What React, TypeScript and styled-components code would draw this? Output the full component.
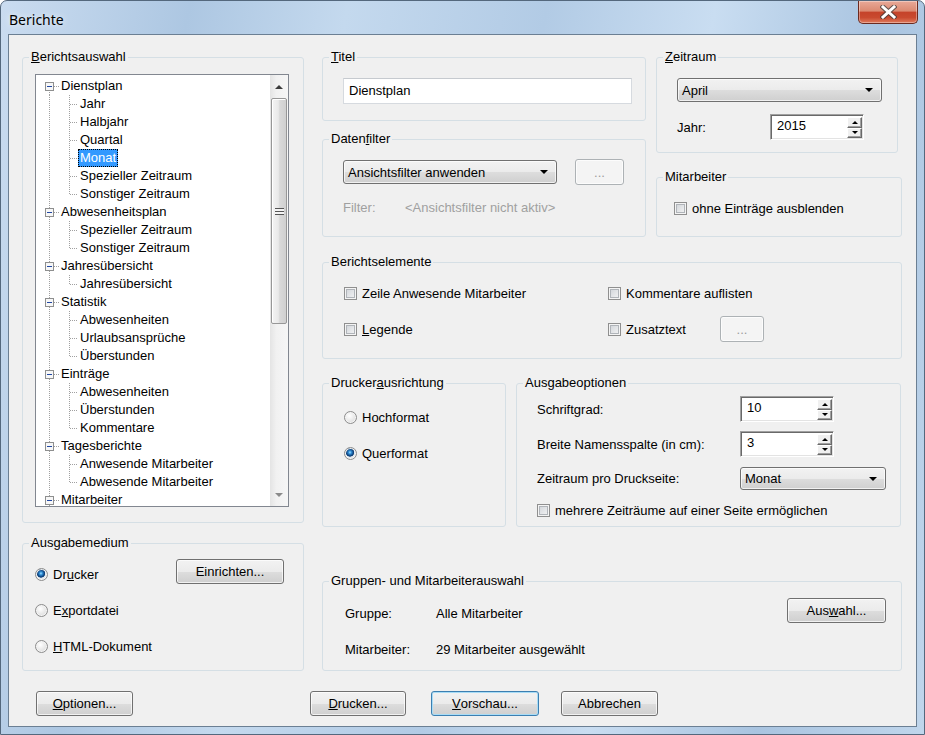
import React from 'react';
import styled, { createGlobalStyle } from 'styled-components';

const GlobalStyle = createGlobalStyle`
  html, body {
    margin: 0;
    padding: 0;
    background: #fff;
  }
  body {
    font-family: "Liberation Sans", Arial, sans-serif;
    font-size: 13px;
    color: #000;
  }
  * {
    box-sizing: border-box;
  }
`;

type Node = { label: string; children: string[] };

const tree: Node[] = [
    { label: 'Dienstplan', children: ['Jahr', 'Halbjahr', 'Quartal', 'Monat', 'Spezieller Zeitraum', 'Sonstiger Zeitraum'] },
    { label: 'Abwesenheitsplan', children: ['Spezieller Zeitraum', 'Sonstiger Zeitraum'] },
    { label: 'Jahresübersicht', children: ['Jahresübersicht'] },
    { label: 'Statistik', children: ['Abwesenheiten', 'Urlaubsansprüche', 'Überstunden'] },
    { label: 'Einträge', children: ['Abwesenheiten', 'Überstunden', 'Kommentare'] },
    { label: 'Tagesberichte', children: ['Anwesende Mitarbeiter', 'Abwesende Mitarbeiter'] },
    { label: 'Mitarbeiter', children: [] },
];

const dots = { stroke: '#a0a0a0', strokeDasharray: '1 1', shapeRendering: 'crispEdges' as const };

const TreeView = () => {
    const rows: React.ReactNode[] = [];
    tree.forEach((node, i) => {
        rows.push(
            <TreeRow key={`n${i}`}>
                <svg width="23" height="18">
                    <line x1="13.5" y1={i === 0 ? 9 : 0} x2="13.5" y2="18" {...dots}/>
                    <line x1="18" y1="9.5" x2="23" y2="9.5" {...dots}/>
                    <rect x="9.5" y="5.5" width="8" height="8" fill="#f7f7f7" stroke="#8e8f8f" shapeRendering="crispEdges"/>
                    <line x1="11" y1="9.5" x2="16" y2="9.5" stroke="#2148a3" shapeRendering="crispEdges"/>
                </svg>
                <NodeLabel>{node.label}</NodeLabel>
            </TreeRow>
        );
        node.children.forEach((child, j) => {
            const last = j === node.children.length - 1;
            rows.push(
                <TreeRow key={`n${i}c${j}`}>
                    <svg width="42" height="18">
                        <line x1="13.5" y1="0" x2="13.5" y2="18" {...dots}/>
                        <line x1="33.5" y1="0" x2="33.5" y2={last ? 10 : 18} {...dots}/>
                        <line x1="34" y1="9.5" x2="42" y2="9.5" {...dots}/>
                    </svg>
                    <NodeLabel $selected={i === 0 && child === 'Monat'}>{child}</NodeLabel>
                </TreeRow>
            );
        });
    });

    return (
        <Tree>
            <TreeList>{rows}</TreeList>
            <Scrollbar>
                <ScrollArrow><Triangle $dir="up" $color="#3c3c3c"/></ScrollArrow>
                <ScrollTrack>
                    <Thumb>
                        <Grip/>
                    </Thumb>
                </ScrollTrack>
                <ScrollArrow><Triangle $dir="down" $color="#8a8a8a"/></ScrollArrow>
            </Scrollbar>
        </Tree>
    );
};

const Spin = ({ value, width }: { value: string; width: number }) => (
    <SpinBox $w={width}>
        <SpinValue>{value}</SpinValue>
        <SpinButtons>
            <SpinBtn><Triangle $dir="up" $size={3}/></SpinBtn>
            <SpinBtn><Triangle $dir="down" $size={3}/></SpinBtn>
        </SpinButtons>
    </SpinBox>
);

const Select = ({ value, width, height }: { value: string; width: number; height?: number }) => (
    <Combo $w={width} $h={height}>
        <span>{value}</span>
        <Triangle $dir="down" $size={4}/>
    </Combo>
);

const Check = ({ children, width }: { children: React.ReactNode; width?: number }) => (
    <CheckItem $w={width}>
        <CheckBox/>
        <span>{children}</span>
    </CheckItem>
);

const Radio = ({ children, checked }: { children: React.ReactNode; checked?: boolean }) => (
    <RadioItem>
        <RadioDot $checked={checked}/>
        <span>{children}</span>
    </RadioItem>
);

export default function App() {
    return (
        <>
            <GlobalStyle/>
            <Window>
                <TitleBar>
                    <Title>Berichte</Title>
                    <CloseButton>
                        <svg width="17" height="14" viewBox="0 0 17 14">
                            <path d="M3 2 L14 12 M14 2 L3 12" stroke="#3b3b3b" strokeOpacity="0.75" strokeWidth="5" strokeLinecap="square"/>
                            <path d="M3 2 L14 12 M14 2 L3 12" stroke="#fff" strokeWidth="3" strokeLinecap="square"/>
                        </svg>
                    </CloseButton>
                </TitleBar>

                <Client>
                    <Main>
                        <LeftCol>
                            <Group>
                                <Legend><u>B</u>erichtsauswahl</Legend>
                                <TreeBody>
                                    <TreeView/>
                                </TreeBody>
                            </Group>

                            <Group>
                                <Legend>Ausgabemedium</Legend>
                                <MediaBody>
                                    <RadioStack>
                                        <Radio checked>Dr<u>u</u>cker</Radio>
                                        <Radio>E<u>x</u>portdatei</Radio>
                                        <Radio><u>H</u>TML-Dokument</Radio>
                                    </RadioStack>
                                    <Button $w={108} $mt={3}>Einrichten...</Button>
                                </MediaBody>
                            </Group>
                        </LeftCol>

                        <RightCol>
                            <TopGrid>
                                <StackCol $gap={10}>
                                    <Group>
                                        <Legend><u>T</u>itel</Legend>
                                        <TitleBody>
                                            <TextInput>Dienstplan</TextInput>
                                        </TitleBody>
                                    </Group>
                                    <Group>
                                        <Legend>Daten<u>f</u>ilter</Legend>
                                        <FilterBody>
                                            <FilterRow>
                                                <Select value="Ansichtsfilter anwenden" width={214}/>
                                                <Button $w={49} $h={26} $disabled $ml={18}>...</Button>
                                            </FilterRow>
                                            <FilterInfo>
                                                <FilterKey>Filter:</FilterKey>
                                                <span>&lt;Ansichtsfilter nicht aktiv&gt;</span>
                                            </FilterInfo>
                                        </FilterBody>
                                    </Group>
                                </StackCol>

                                <StackCol $gap={16}>
                                    <PeriodGroup>
                                        <Legend><u>Z</u>eitraum</Legend>
                                        <PeriodBody>
                                            <Select value="April" width={205}/>
                                            <YearRow>
                                                <YearLabel>Jahr:</YearLabel>
                                                <Spin value="2015" width={94}/>
                                            </YearRow>
                                        </PeriodBody>
                                    </PeriodGroup>
                                    <Group>
                                        <Legend>Mitarbeiter</Legend>
                                        <StaffBody>
                                            <Check>ohne Einträge ausblenden</Check>
                                        </StaffBody>
                                    </Group>
                                </StackCol>
                            </TopGrid>

                            <ElementsGroup>
                                <Legend>Berichtselemente</Legend>
                                <ElementsBody>
                                    <Check>Zeile Anwesende Mitarbeiter</Check>
                                    <Check>Kommentare auflisten</Check>
                                    <Check><u>L</u>egende</Check>
                                    <InlineRow>
                                        <Check width={112}>Zusatztext</Check>
                                        <Button $w={44} $h={26} $disabled>...</Button>
                                    </InlineRow>
                                </ElementsBody>
                            </ElementsGroup>

                            <OutputGrid>
                                <Group>
                                    <Legend>Drucker<u>a</u>usrichtung</Legend>
                                    <OrientBody>
                                        <RadioStack>
                                            <Radio>Hochformat</Radio>
                                            <Radio checked>Querformat</Radio>
                                        </RadioStack>
                                    </OrientBody>
                                </Group>
                                <Group>
                                    <Legend>Ausgabeoptionen</Legend>
                                    <OptionsBody>
                                        <OptRow $h={26}>
                                            <span>Schriftgrad:</span>
                                            <Spin value="10" width={94}/>
                                        </OptRow>
                                        <OptRow $h={26} $mt={9}>
                                            <span>Breite Namensspalte (in cm):</span>
                                            <Spin value="3" width={94}/>
                                        </OptRow>
                                        <OptRow $h={23} $mt={10}>
                                            <span>Zeitraum pro Druckseite:</span>
                                            <Select value="Monat" width={146} height={23}/>
                                        </OptRow>
                                        <OptRow $h={16} $mt={12}>
                                            <Check>mehrere Zeiträume auf einer Seite ermöglichen</Check>
                                        </OptRow>
                                    </OptionsBody>
                                </Group>
                            </OutputGrid>

                            <SelectionGroup>
                                <Legend>Gruppen- und Mitarbeiterauswahl</Legend>
                                <SelectionBody>
                                    <span>Gruppe:</span>
                                    <span>Alle Mitarbeiter</span>
                                    <Button $w={99}>Aus<u>w</u>ahl...</Button>
                                    <span>Mitarbeiter:</span>
                                    <span>29 Mitarbeiter ausgewählt</span>
                                </SelectionBody>
                            </SelectionGroup>
                        </RightCol>
                    </Main>

                    <Footer>
                        <Button $w={97}><u>O</u>ptionen...</Button>
                        <Button $w={96} $ml={177}><u>D</u>rucken...</Button>
                        <Button $w={108} $ml={25} $default><u>V</u>orschau...</Button>
                        <Button $w={97} $ml={22}>Abbrechen</Button>
                    </Footer>
                </Client>
            </Window>
        </>
    );
}

const Window = styled.div`
  width: 925px;
  height: 735px;
  border: 1px solid #54687d;
  border-radius: 7px 7px 0 0;
  padding: 0 7px 7px;
  display: flex;
  flex-direction: column;
  background: linear-gradient(100deg, #cadcf0 0%, #adc7e2 18%, #c4d9ee 33%, #b2cbe5 52%, #c9ddf1 68%, #a9c4e0 84%, #c0d6ec 100%);
`

const TitleBar = styled.div`
  height: 33px;
  margin: 0 -7px;
  padding: 0 6px 0 8px;
  display: flex;
  align-items: flex-start;
  justify-content: space-between;
`

const Title = styled.span`
  margin-top: 9px;
  font-family: "Noto Sans", "Open Sans", sans-serif;
  font-size: 14px;
  line-height: 20px;
  text-shadow: 0 0 6px rgba(255, 255, 255, 0.9);
`

const CloseButton = styled.div`
  width: 60px;
  height: 23px;
  display: flex;
  align-items: center;
  justify-content: center;
  border: 1px solid #6b2a1f;
  border-top: none;
  border-radius: 0 0 5px 5px;
  background: linear-gradient(#e8a998 0%, #db8a72 45%, #c5432a 52%, #c94a2f 75%, #df7a5c 100%);
  box-shadow: inset 0 0 0 1px rgba(255, 255, 255, 0.35);
`

const Client = styled.div`
  flex: 1;
  display: flex;
  flex-direction: column;
  padding: 14px 0 10px 13px;
  background: #f0f0f0;
  border: 1px solid #6b7f93;
`

const Main = styled.div`
  display: grid;
  grid-template-columns: 282px 580px;
  column-gap: 18px;
`

const LeftCol = styled.div`
  display: flex;
  flex-direction: column;
  gap: 12px;
`

const RightCol = styled.div`
  display: flex;
  flex-direction: column;
`

const Group = styled.fieldset`
  margin: 0;
  padding: 0;
  min-width: 0;
  border: 1px solid #d5dfe5;
  border-radius: 3px;
`

const Legend = styled.legend`
  margin-left: 6px;
  padding: 0 2px;
  line-height: 16px;
`

const TreeBody = styled.div`
  padding: 9px 14px 15px 12px;
`

const Tree = styled.div`
  height: 433px;
  display: flex;
  border: 1px solid #828790;
  background: #fff;
`

const TreeList = styled.div`
  flex: 1;
  padding-top: 2px;
  overflow: hidden;
`

const TreeRow = styled.div`
  height: 18px;
  display: flex;
  align-items: center;
  white-space: nowrap;

  svg {
    flex-shrink: 0;
  }
`

const NodeLabel = styled.span<{ $selected?: boolean }>`
  padding: 0 1px;
  line-height: 16px;
  border: 1px ${p => (p.$selected ? 'dotted #000' : 'solid transparent')};
  background: ${p => (p.$selected ? '#3399ff' : 'transparent')};
  color: ${p => (p.$selected ? '#fff' : '#000')};
`

const Scrollbar = styled.div`
  width: 18px;
  display: flex;
  flex-direction: column;
  background: linear-gradient(to right, #e4e4e4, #f1f1f1 35%, #f6f6f6);
`

const ScrollArrow = styled.div`
  height: 23px;
  display: flex;
  align-items: center;
  justify-content: center;
`

const ScrollTrack = styled.div`
  flex: 1;
  padding: 0 1px;
`

const Thumb = styled.div`
  height: 226px;
  display: flex;
  align-items: center;
  justify-content: center;
  border: 1px solid #979797;
  border-radius: 2px;
  background: linear-gradient(to right, #f4f4f4, #e9e9e9 45%, #d9d9d9 55%, #d0d0d0);
  box-shadow: inset 1px 1px 0 #fff;
`

const Grip = styled.div`
  width: 9px;
  height: 7px;
  background: repeating-linear-gradient(to bottom, #555 0 1px, #f4f4f4 1px 3px);
`

const Triangle = styled.span<{ $dir: 'up' | 'down'; $size?: number; $color?: string }>`
  width: 0;
  height: 0;
  border-left: ${p => p.$size ?? 4}px solid transparent;
  border-right: ${p => p.$size ?? 4}px solid transparent;
  ${p => (p.$dir === 'up' ? 'border-bottom' : 'border-top')}: ${p => p.$size ?? 4}px solid ${p => p.$color ?? '#000'};
`

const MediaBody = styled.div`
  display: flex;
  justify-content: space-between;
  align-items: flex-start;
  padding: 5px 19px 6px 12px;
`

const RadioStack = styled.div`
  display: grid;
  grid-auto-rows: 36px;
  align-items: center;
`

const RadioItem = styled.label`
  display: flex;
  align-items: center;
  gap: 5px;
`

const RadioDot = styled.span<{ $checked?: boolean }>`
  width: 13px;
  height: 13px;
  border-radius: 50%;
  border: 1px solid #8c8c8c;
  background: ${p => (p.$checked
        ? 'radial-gradient(circle at 45% 40%, #a6e1ff 0, #2f8fd8 1.5px, #0f3f78 3.5px, #1a4f86 4px, transparent 4.5px), radial-gradient(circle at 40% 35%, #ffffff, #cfd3d8)'
        : 'radial-gradient(circle at 40% 35%, #ffffff, #d2d2d2)')};
  box-shadow: inset 0 0 0 1px #f4f4f4;
`

const CheckItem = styled.label<{ $w?: number }>`
  display: flex;
  align-items: center;
  gap: 5px;
  ${p => (p.$w ? `width: ${p.$w}px;` : '')}
  white-space: nowrap;
`

const CheckBox = styled.span`
  width: 13px;
  height: 13px;
  flex-shrink: 0;
  border: 1px solid #8f8f8f;
  background: linear-gradient(135deg, #cdd1d6, #f7f7f7);
  box-shadow: inset 0 0 0 1px #f4f4f4, inset 0 0 0 2px #b0b4b9;
`

const Button = styled.div<{ $w: number; $h?: number; $ml?: number; $mt?: number; $disabled?: boolean; $default?: boolean }>`
  width: ${p => p.$w}px;
  height: ${p => p.$h ?? 25}px;
  margin-left: ${p => p.$ml ?? 0}px;
  margin-top: ${p => p.$mt ?? 0}px;
  display: flex;
  align-items: center;
  justify-content: center;
  border-radius: 3px;
  border: 1px solid ${p => (p.$disabled ? '#adb2b5' : p.$default ? '#3c7fb1' : '#707070')};
  color: ${p => (p.$disabled ? '#9c9c9c' : '#000')};
  background: ${p => (p.$disabled
        ? '#f4f4f4'
        : 'linear-gradient(#f2f2f2 0%, #ebebeb 50%, #dddddd 51%, #cfcfcf 100%)')};
  box-shadow: ${p => (p.$default
        ? 'inset 0 0 0 1px #a8dcf6'
        : 'inset 0 0 0 1px rgba(255, 255, 255, 0.7)')};
`

const Combo = styled.div<{ $w: number; $h?: number }>`
  width: ${p => p.$w}px;
  height: ${p => p.$h ?? 24}px;
  display: flex;
  align-items: center;
  justify-content: space-between;
  padding: 0 8px 0 4px;
  border: 1px solid #707070;
  border-radius: 3px;
  background: linear-gradient(#f2f2f2 0%, #ebebeb 50%, #dddddd 51%, #cfcfcf 100%);
  box-shadow: inset 0 0 0 1px rgba(255, 255, 255, 0.7);
`

const SpinBox = styled.div<{ $w: number }>`
  width: ${p => p.$w}px;
  height: 26px;
  display: flex;
  padding: 2px 1px 1px 2px;
  background: #fff;
  border: 1px solid;
  border-color: #a0a0a0 #fff #fff #a0a0a0;
  box-shadow: inset 1px 1px 0 #696969, inset -1px -1px 0 #e3e3e3;
`

const SpinValue = styled.span`
  flex: 1;
  padding-left: 4px;
  line-height: 18px;
`

const SpinButtons = styled.div`
  width: 15px;
  display: flex;
  flex-direction: column;
`

const SpinBtn = styled.div`
  flex: 1;
  display: flex;
  align-items: center;
  justify-content: center;
  background: #f0f0f0;
  border: 1px solid;
  border-color: #fff #696969 #696969 #fff;
  box-shadow: inset -1px -1px 0 #a0a0a0;
`

const TopGrid = styled.div`
  display: grid;
  grid-template-columns: 324px 246px;
  column-gap: 10px;
`

const StackCol = styled.div<{ $gap: number }>`
  display: flex;
  flex-direction: column;
  gap: ${p => p.$gap}px;
`

const TitleBody = styled.div`
  padding: 13px 13px 16px 20px;
`

const TextInput = styled.div`
  height: 26px;
  padding: 0 5px;
  line-height: 24px;
  background: #fff;
  border: 1px solid #d6dadf;
  border-top-color: #c6cacf;
`

const FilterBody = styled.div`
  padding: 12px 0 20px 20px;
`

const FilterRow = styled.div`
  height: 26px;
  display: flex;
  align-items: center;
`

const FilterInfo = styled.div`
  margin-top: 15px;
  display: flex;
  line-height: 16px;
  color: #a0a0a0;
`

const FilterKey = styled.span`
  width: 62px;
`

const PeriodGroup = styled(Group)`
  width: 242px;
`

const PeriodBody = styled.div`
  padding: 13px 15px 12px 20px;
`

const YearRow = styled.div`
  margin-top: 12px;
  display: flex;
  align-items: center;
`

const YearLabel = styled.span`
  width: 93px;
`

const StaffBody = styled.div`
  height: 16px;
  box-sizing: content-box;
  padding: 15px 0 20px 17px;
  display: flex;
  align-items: center;
`

const ElementsGroup = styled(Group)`
  margin-top: 17px;
`

const ElementsBody = styled.div`
  display: grid;
  grid-template-columns: 264px 1fr;
  grid-template-rows: 26px 26px;
  row-gap: 10px;
  align-items: center;
  padding: 10px 0 16px 21px;
`

const InlineRow = styled.div`
  display: flex;
  align-items: center;
`

const OutputGrid = styled.div`
  margin-top: 16px;
  display: grid;
  grid-template-columns: 184px 385px;
  column-gap: 10px;
`

const OrientBody = styled.div`
  padding: 8px 0 0 21px;
`

const OptionsBody = styled.div`
  padding: 5px 0 8px 20px;
`

const OptRow = styled.div<{ $h: number; $mt?: number }>`
  height: ${p => p.$h}px;
  margin-top: ${p => p.$mt ?? 0}px;
  display: grid;
  grid-template-columns: 203px auto;
  align-items: center;
`

const SelectionGroup = styled(Group)`
  margin-top: auto;
`

const SelectionBody = styled.div`
  display: grid;
  grid-template-columns: 91px 1fr 99px;
  grid-template-rows: 30px 30px;
  row-gap: 6px;
  align-items: center;
  padding: 9px 15px 6px 22px;

  & > div {
    align-self: start;
  }
`

const Footer = styled.div`
  display: flex;
  margin-top: 20px;
  padding-left: 14px;
`
